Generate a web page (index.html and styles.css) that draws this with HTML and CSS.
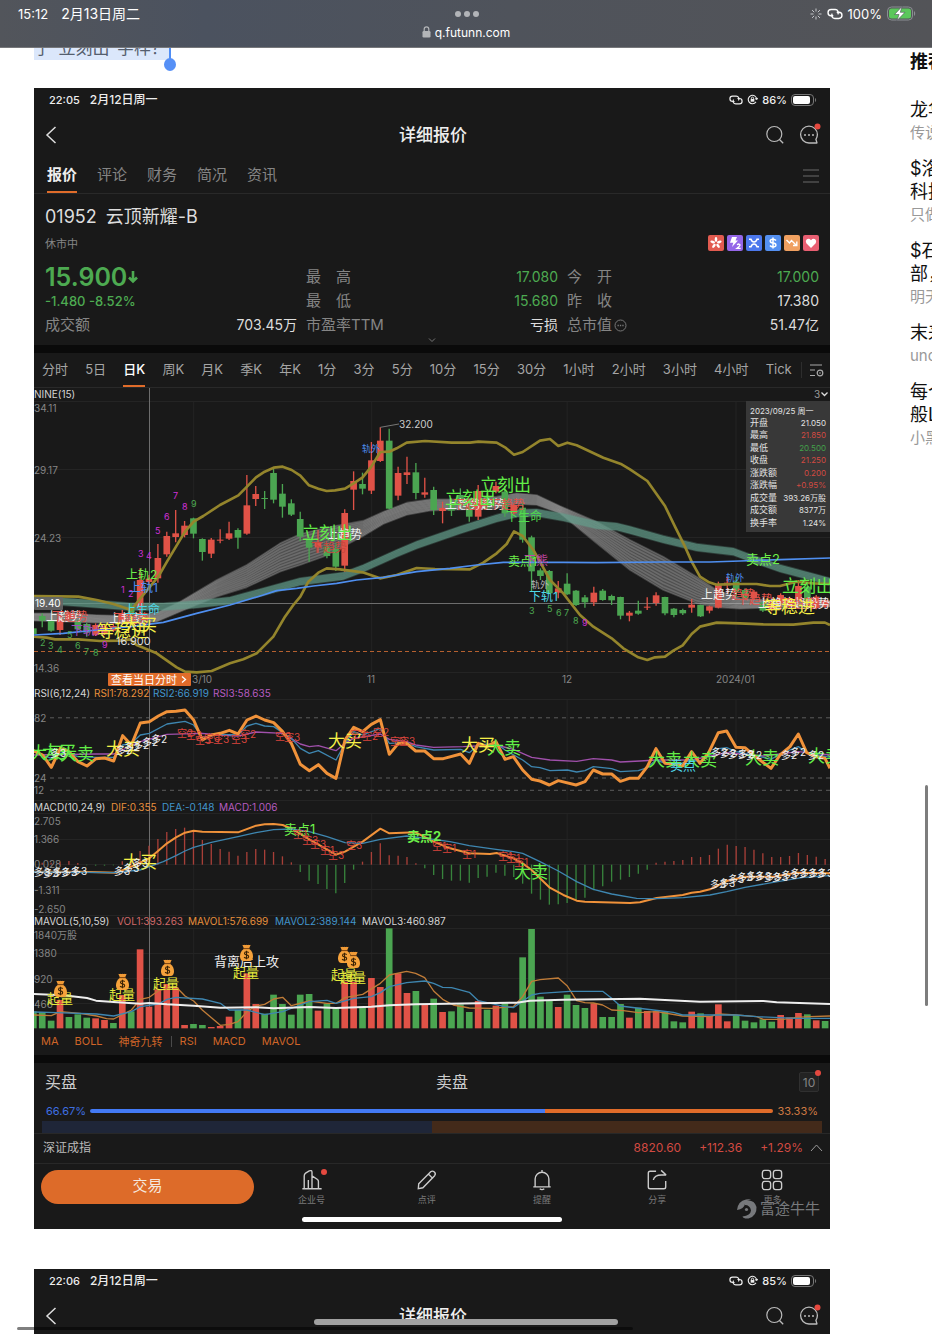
FILE: index.html
```html
<!DOCTYPE html>
<html lang="zh-CN">
<head>
<meta charset="utf-8">
<meta name="viewport" content="width=device-width, initial-scale=1">
<title>q.futunn.com</title>
<link rel="stylesheet" href="styles.css">
</head>
<body>
<svg class="defs" aria-hidden="true">
  <symbol id="i-link" viewBox="0 0 14 10"><path d="M5.500 6.500H3.600a2.700 2.700 0 0 1 0-5.400h3.600a2.700 2.700 0 0 1 2.200 4.300M8.500 3.500h1.900a2.700 2.700 0 0 1 0 5.400H6.800a2.700 2.700 0 0 1-2.200-4.300" fill="none" stroke="currentColor" stroke-width="1.200"/></symbol>
  <symbol id="i-lockrot" viewBox="0 0 12 12"><path d="M9.800 8.600A4.600 4.600 0 1 1 10.600 6M10.600 6l1-1.600M10.600 6L9 5" fill="none" stroke="currentColor" stroke-width="1.200"/><rect x="4" y="5.400" width="4" height="3" fill="currentColor"/><path d="M4.800 5.600V4.600a1.200 1.200 0 0 1 2.400 0v1" fill="none" stroke="currentColor"/></symbol>
  <symbol id="i-battery" viewBox="0 0 26 12"><rect x=".5" y=".5" width="22" height="11" rx="3.500" fill="none" stroke="#777"/><rect x="2" y="2" width="17" height="8" rx="2" fill="#fff"/><path d="M24 4v4c1.500-.6 1.500-3.400 0-4z" fill="#777"/></symbol>
  <symbol id="i-back" viewBox="0 0 12 18"><path d="M10.500 1L2 9l8.500 8" fill="none" stroke="currentColor" stroke-width="1.500"/></symbol>
  <symbol id="i-search" viewBox="0 0 20 20"><circle cx="9.300" cy="9" r="7.500" fill="none" stroke="currentColor" stroke-width="1.200"/><path d="M14.500 14.500l3.700 3.700" stroke="currentColor" stroke-width="1.300"/></symbol>
  <symbol id="i-chat" viewBox="0 0 24 24"><path d="M20 20H12a8.400 8.400 0 1 1 8.400-8.400c0 2-.6 3.300-1.500 4.700z" fill="none" stroke="currentColor" stroke-width="1.300" stroke-linejoin="round"/><g fill="currentColor"><circle cx="8" cy="12" r="1"/><circle cx="12" cy="12" r="1"/><circle cx="16" cy="12" r="1"/></g><circle cx="20.500" cy="3.500" r="3" fill="#e5493f"/></symbol>
  <symbol id="i-bag" viewBox="0 0 15 18"><path d="M3.300.800q1 .5 2 0 1 .6 2.200 0 1.200.6 2.200 0 1 .5 2 0L10.300 4H4.700z" fill="#f09a36"/><path d="M4.600 5h5.800Q14 8 14 12.300q0 4.700-3.500 4.700h-6Q1 17 1 12.300 1 8 4.600 5z" fill="#f6a23b"/><path d="M4.400 4.600h6.200" stroke="#8a4c12" stroke-width="1.100"/><path d="M9.700 8.700Q8.800 7.800 7.500 7.800q-2 0-2 1.600 0 1.200 2 1.500 2.200.4 2.200 1.800T7.500 14.200q-1.500 0-2.400-1M7.500 6.700v8.600" fill="none" stroke="#3a2205" stroke-width="1.100"/></symbol>
</svg>

<header class="browser">
  <div class="browser-status">
    <span class="clock">15:12<span>2月13日周二</span></span>
    <span class="dots"><i></i><i></i><i></i></span>
    <span class="signals">
      <svg width="12" height="12" viewBox="0 0 12 12"><path d="M6 .5v3M9.900 2.100L7.800 4.200M11.500 6h-3M9.900 9.900L7.800 7.800M6 11.500v-3M2.100 9.900l2.100-2.100M.5 6h3M2.100 2.100l2.100 2.100" stroke="#c6c8cc"/></svg>
      <svg width="16" height="12"><use href="#i-link"/></svg>
      <span>100%</span>
      <svg width="29" height="15" viewBox="0 0 29 15"><rect x=".5" y="1" width="25" height="13" rx="4" fill="none" stroke="#8b8e93"/><rect x="2" y="2.500" width="22" height="10" rx="2.500" fill="#5bc75b"/><path d="M15 .5L7.500 8.500h4.500L10 14.500l8-8.200h-4.700z" fill="#fff" stroke="#4c5058" stroke-width=".6"/><path d="M27 5v5c1.600-.8 1.600-4.200 0-5z" fill="#8b8e93"/></svg>
    </span>
  </div>
  <div class="address">
    <svg width="9" height="12" viewBox="0 0 9 12"><rect x=".5" y="5" width="8" height="6.500" rx="1.200" fill="#b3b5b8"/><path d="M2.200 5V3.200a2.300 2.300 0 0 1 4.600 0V5" fill="none" stroke="#b3b5b8" stroke-width="1.200"/></svg>
    q.futunn.com
  </div>
</header>

<div class="page">
  <main class="post">
    <p class="post-text"><span class="selected">了“立刻出”字样？</span></p>

    <article class="shot">
      <div class="status">
        <span class="clock">22:05<span>2月12日周一</span></span>
        <span class="signals"><svg width="14" height="10"><use href="#i-link"/></svg><svg width="11" height="11"><use href="#i-lockrot"/></svg><span>86%</span><svg width="26" height="12"><use href="#i-battery"/></svg></span>
      </div>
      <div class="titlebar">
        <button type="button" aria-label="返回"><svg width="12" height="18"><use href="#i-back"/></svg></button>
        <h2>详细报价</h2>
        <span class="actions"><button type="button" aria-label="搜索"><svg width="20" height="20"><use href="#i-search"/></svg></button><button type="button" aria-label="消息"><svg width="24" height="24"><use href="#i-chat"/></svg></button></span>
      </div>
      <nav class="tabs">
        <a href="#q" class="on">报价</a><a href="#c">评论</a><a href="#f">财务</a><a href="#g">简况</a><a href="#n">资讯</a>
        <button type="button" aria-label="菜单"><svg width="16" height="14" viewBox="0 0 16 14"><path d="M0 1h16M0 7h16M0 13h16" stroke="#6a6a6a"/></svg></button>
      </nav>

      <section class="quote" id="q">
        <h3>01952&ensp;云顶新耀-B</h3>
        <div class="state">
          <span>休市中</span>
          <span class="badges">
            <svg viewBox="0 0 16 16"><rect width="16" height="16" rx="2" fill="#e25b50"/><g fill="#fff"><ellipse cx="8" cy="4.500" rx="1.300" ry="2.400"/><ellipse cx="8" cy="4.500" rx="1.300" ry="2.400" transform="rotate(72 8 8)"/><ellipse cx="8" cy="4.500" rx="1.300" ry="2.400" transform="rotate(144 8 8)"/><ellipse cx="8" cy="4.500" rx="1.300" ry="2.400" transform="rotate(216 8 8)"/><ellipse cx="8" cy="4.500" rx="1.300" ry="2.400" transform="rotate(288 8 8)"/></g></svg>
            <svg viewBox="0 0 16 16"><rect width="16" height="16" rx="2" fill="#9566e8"/><path d="M5 2h5L8.500 5.500H11L5 12l1.300-4.300H3z" fill="#fff"/><path d="M10 9.700q2.600-1.500 3 .3 0 1-3 3.300h3.700" fill="none" stroke="#fff" stroke-width="1.300"/></svg>
            <svg viewBox="0 0 16 16"><rect width="16" height="16" rx="2" fill="#4c78ec"/><path d="M3 4.200h2Q6 7 8 7t3-2.800h2M3 11.800h2Q6 9 8 9t3 2.800h2" fill="none" stroke="#fff" stroke-width="1.500"/></svg>
            <svg viewBox="0 0 16 16"><rect width="16" height="16" rx="2" fill="#5490f1"/><path d="M11 5.500Q10 4.200 8 4.200 5.200 4.200 5.200 6T8 8t2.900 2-2.900 1.900q-2 0-3-1.400M8 2.500v11" fill="none" stroke="#fff" stroke-width="1.500"/></svg>
            <svg viewBox="0 0 16 16"><rect width="16" height="16" rx="2" fill="#f0a060"/><path d="M2.500 5l3 3 2-2.500 4.500 4.500M12.800 6.500V10.500H9" fill="none" stroke="#fff" stroke-width="1.400"/></svg>
            <svg viewBox="0 0 16 16"><rect width="16" height="16" rx="2" fill="#e85f72"/><path d="M8 13L3.300 8.300Q2 6 3.800 4.300 6 3 8 5.200q2-2.200 4.200-.9Q14 6 12.700 8.300z" fill="#fff"/></svg>
          </span>
        </div>
        <div class="figures">
          <dl>
            <div><dd class="price">15.900<svg width="10" height="13" viewBox="0 0 10 13"><path d="M5 0v10M1 6.500l4 4 4-4" fill="none" stroke="#4daa51" stroke-width="2.600"/></svg></dd></div>
            <div><dd class="change">-1.480 -8.52%</dd></div>
            <div><dt>成交额</dt><dd>703.45万</dd></div>
          </dl>
          <dl>
            <div><dt>最　高</dt><dd class="down">17.080</dd></div>
            <div><dt>最　低</dt><dd class="down">15.680</dd></div>
            <div><dt>市盈率TTM</dt><dd>亏损</dd></div>
          </dl>
          <dl>
            <div><dt>今　开</dt><dd class="down">17.000</dd></div>
            <div><dt>昨　收</dt><dd>17.380</dd></div>
            <div><dt>总市值<svg width="13" height="13" viewBox="0 0 13 13"><circle cx="6.500" cy="6.500" r="5.500" fill="none" stroke="#777"/><path d="M3.500 6.500h1.300M5.900 6.500h1.300M8.300 6.500h1.300" stroke="#777" stroke-width="1.300"/></svg></dt><dd>51.47亿</dd></div>
          </dl>
        </div>
        <svg class="expand" width="8" height="5" viewBox="0 0 8 5"><path d="M1 .5l3 3 3-3" fill="none" stroke="#777"/></svg>
      </section>

      <nav class="periods">
        <a href="#p">分时</a><a href="#p">5日</a><a href="#p" class="on">日K</a><a href="#p">周K</a><a href="#p">月K</a><a href="#p">季K</a><a href="#p">年K</a><a href="#p">1分</a><a href="#p">3分</a><a href="#p">5分</a><a href="#p">10分</a><a href="#p">15分</a><a href="#p">30分</a><a href="#p">1小时</a><a href="#p">2小时</a><a href="#p">3小时</a><a href="#p">4小时</a><a href="#p">Tick</a>
        <button type="button" aria-label="设置"><svg width="15" height="13" viewBox="0 0 15 13"><path d="M1 1h12M1 6h5M1 11.500h5" stroke="#aaa" stroke-width="1.200"/><circle cx="11" cy="9" r="2.800" fill="none" stroke="#aaa" stroke-width="1.200"/><circle cx="11" cy="9" r=".8" fill="#aaa"/></svg></button>
      </nav>

      <div class="chart" id="p">
        <svg class="plot" viewBox="34 388 796 642" role="img" aria-label="日K线图">
          <g class="grid">
            <path d="M193.700 401V672M371.700 401V672M567.200 401V672M736 401V672M193.700 700V800M371.700 700V800M567.200 700V800M736 700V800M193.700 814V915M371.700 814V915M567.200 814V915M736 814V915M193.700 928V1028M371.700 928V1028M567.200 928V1028M736 928V1028"/>
            <path d="M34 401.500H830M34 469.500H830M34 537.500H830M34 672.500H830M34 699.500H830M34 800.500H830M34 813.500H830M34 839.500H830M34 864.500H830M34 889.500H830M34 915.500H830M34 928.500H830M34 953.500H830M34 978.500H830M34 1003.500H830"/>
          </g>
          <g class="axis">
            <text x="34" y="412">34.11</text><text x="34" y="474">29.17</text><text x="34" y="542">24.23</text><text x="34" y="672">14.36</text>
            <text x="34" y="722">82</text><text x="34" y="782">24</text><text x="34" y="794">12</text>
            <text x="34" y="825">2.705</text><text x="34" y="843">1.366</text><text x="34" y="868">0.028</text><text x="34" y="894">-1.311</text><text x="34" y="913">-2.650</text>
            <text x="34" y="939">1840万股</text><text x="34" y="957">1380</text><text x="34" y="983">920</text><text x="34" y="1008">460</text>
            <text x="192" y="683">3/10</text><text x="367" y="683">11</text><text x="562" y="683">12</text><text x="716" y="683">2024/01</text>
          </g>
          <path d="M34 651.500H830" stroke="#b5602f" stroke-dasharray="4 3"/>
          <path d="M50 717.800H830M50 778H830M50 790.300H830" stroke="#5c5c5c" stroke-dasharray="4 4"/>
          <path d="M34 603.500H830M149.500 388V1028" stroke="#6d6d6d"/>

          <g transform="translate(30 380) scale(.33333)" fill="none" stroke-linejoin="round">
            <g id="ribbons"></g>
            <g id="candles"></g>
            <polyline class="band" points="10,648 145,650 200,660 250,672 304,690 331,655 360,620 385,590 411,545 438,500 465,455 491,425 520,408 570,375 625,346 651,320 678,292 704,275 731,263 758,260 785,270 811,287 837,316 865,326 890,333 915,331 945,326 971,310 998,292 1024,260 1051,216 1078,215 1100,205 1130,188 1185,183 1265,188 1320,188 1345,185 1400,188 1425,202 1452,224 1478,216 1530,182 1560,177 1585,198 1612,188 1640,196 1720,233 1775,253 1800,268 1852,303 1905,378 1935,440 1965,500 1985,545 2010,590 2035,606 2060,614 2120,612 2180,612 2220,618 2250,618 2300,605 2350,610 2400,612"/>
            <polyline class="band" points="10,770 50,773 75,778 145,778 210,783 270,782 300,778 320,795 380,820 440,862 465,875 500,877 545,873 600,850 640,838 680,820 730,770 765,710 790,675 811,650 835,605 865,578 890,565 930,568 998,577 1050,595 1100,585 1160,564 1215,567 1320,568 1360,548 1400,520 1430,492 1452,454 1478,468 1510,510 1530,545 1560,600 1600,640 1615,660 1650,705 1690,740 1745,775 1780,805 1825,832 1852,840 1875,832 1905,830 1930,812 1958,796 1985,762 2010,740 2060,728 2130,730 2200,733 2290,734 2350,728 2385,728 2400,735"/>
            <polyline stroke="#4f8ff0" stroke-width="5" points="10,765 100,760 200,750 300,740 400,727 500,700 600,675 700,645 740,632 800,625 850,618 920,610 980,600 1060,592 1160,575 1260,565 1340,555 1420,547 1600,547 1700,548 1900,546 2040,546 2130,543 2250,539 2400,534"/>
            <path d="M1051 142L1107 132" stroke="#777" stroke-width="3"/>
          </g>

          <g transform="translate(30 680) scale(.33333)" fill="none" stroke-linejoin="round">
            <g id="histogram"></g>
            <polyline class="purple" points="10,225 200,222 251,222 331,185 411,163 517,160 571,165 624,168 678,156 758,160 811,192 838,200 865,197 918,212 945,190 971,175 1051,162 1078,178 1130,185 1157,195 1211,202 1300,200 1398,195 1450,208 1505,232 1560,240 1640,244 1690,236 1745,240 1771,246 1830,243 1878,240 1985,240 2090,218 2200,228 2305,215 2400,225"/>
            <polyline class="blue" points="10,215 64,235 91,215 144,230 198,232 251,232 278,195 304,190 331,165 358,160 411,132 465,124 491,135 517,172 571,163 624,165 651,138 678,130 704,138 731,140 758,158 784,175 811,205 838,220 865,212 918,240 945,190 971,155 998,165 1051,145 1078,190 1130,188 1157,200 1211,210 1292,208 1318,218 1345,195 1398,190 1425,210 1478,240 1505,260 1530,263 1560,272 1612,270 1640,276 1665,272 1690,260 1745,266 1771,275 1825,272 1852,263 1878,240 1930,258 1985,240 2010,245 2065,206 2090,203 2118,215 2200,232 2223,238 2250,222 2305,200 2330,218 2400,232"/>
            <polyline class="orange thick" points="10,212 38,225 64,262 91,205 117,215 144,245 171,258 198,236 224,234 251,243 278,167 304,195 331,129 358,125 385,108 411,95 438,94 465,90 491,120 517,180 544,165 571,160 598,151 624,162 651,120 678,108 704,120 731,128 758,155 784,190 811,253 838,272 865,254 891,280 918,295 945,180 971,142 998,155 1024,133 1051,119 1078,223 1105,190 1130,190 1157,213 1184,213 1211,236 1240,236 1292,222 1318,250 1345,190 1370,200 1398,185 1425,238 1450,230 1478,270 1505,298 1530,303 1558,315 1585,302 1638,315 1665,305 1690,270 1718,282 1745,282 1771,304 1798,295 1825,295 1852,260 1878,206 1905,250 1930,252 1958,258 1985,215 2010,250 2035,220 2065,158 2090,153 2118,202 2145,203 2170,225 2200,248 2223,265 2250,225 2280,200 2305,162 2330,218 2358,230 2385,235 2400,265"/>
            <polyline class="orange" points="10,575 150,575 260,578 304,560 358,535 385,512 411,490 438,472 465,458 491,452 517,455 624,457 678,437 704,433 731,432 758,435 784,445 838,478 918,524 945,515 998,485 1051,446 1078,460 1157,457 1211,485 1260,505 1318,520 1380,522 1400,519 1450,535 1478,550 1505,570 1530,595 1558,622 1600,645 1640,662 1665,665 1800,669 1830,667 1880,654 1958,645 1985,638 2010,635 2040,628 2090,603 2145,590 2230,590 2300,578 2400,580"/>
            <polyline class="blue" points="10,576 250,578 330,570 400,545 438,527 465,513 491,502 544,487 624,470 678,458 731,449 784,447 838,455 891,470 945,488 998,490 1051,478 1130,468 1211,478 1260,485 1318,497 1398,508 1450,515 1478,520 1530,545 1585,573 1640,605 1690,628 1745,642 1820,655 1880,656 1960,653 2040,645 2090,635 2145,622 2230,607 2320,592 2400,587"/>
          </g>

          <g transform="translate(30 910) scale(.33333)" fill="none" stroke-linejoin="round">
            <g id="volume"></g>
            <polyline class="orange thin" points="10,315 64,317 91,305 150,310 200,318 230,326 251,327 304,300 331,268 358,262 385,242 438,230 465,258 491,273 517,300 571,346 598,343 624,335 651,305 678,288 704,283 731,267 758,262 784,287 838,273 891,280 918,280 945,263 998,253 1051,220 1078,195 1130,184 1157,190 1184,203 1211,243 1238,268 1270,285 1318,294 1385,295 1450,290 1478,260 1505,214 1530,209 1585,204 1612,228 1640,272 1665,278 1690,279 1718,285 1745,300 1780,302 1825,308 1880,305 1958,318 2040,320 2065,312 2118,315 2180,320 2200,328 2260,328 2300,322 2340,320 2400,318"/>
            <polyline class="blue" points="10,306 80,308 200,312 251,318 304,305 331,290 385,282 411,268 438,262 517,267 571,280 598,300 651,300 704,314 758,305 811,285 838,275 891,271 918,280 971,265 1024,260 1051,248 1078,230 1130,218 1184,213 1211,220 1238,232 1265,233 1318,247 1345,272 1425,290 1450,293 1505,255 1530,250 1620,244 1718,244 1745,265 1771,288 1870,300 1930,307 1958,315 2118,315 2180,320 2300,325 2400,325"/>
            <polyline stroke="#eee" stroke-width="6" points="10,252 100,256 171,264 198,272 251,276 331,281 358,279 411,283 491,287 571,293 678,292 731,295 838,291 918,294 1024,290 1078,286 1157,283 1460,278 1500,272 1600,269 1830,266 2010,275 2200,273 2240,277 2400,282"/>
          </g>

          <g class="legend">
            <text x="34" y="398">NINE(15)</text>
            <text x="34" y="697">RSI(6,12,24)</text><text x="94" y="697" class="t-orange">RSI1:78.292</text><text x="153" y="697" class="t-blue">RSI2:66.919</text><text x="213" y="697" class="t-purple">RSI3:58.635</text>
            <text x="34" y="811">MACD(10,24,9)</text><text x="111" y="811" class="t-orange">DIF:0.355</text><text x="162" y="811" class="t-blue">DEA:-0.148</text><text x="219" y="811" class="t-purple">MACD:1.006</text>
            <text x="34" y="925">MAVOL(5,10,59)</text><text x="117" y="925" class="t-pink">VOL1:393.263</text><text x="188" y="925" class="t-orange">MAVOL1:576.699</text><text x="275" y="925" class="t-blue">MAVOL2:389.144</text><text x="362" y="925">MAVOL3:460.987</text>
            <text x="814" y="398" class="t-grey">3</text><path d="M821.500 392.500l3 3 3-3" fill="none" stroke="#ddd" stroke-width="1.300"/>
            <text x="399" y="428" class="t-soft">32.200</text>
          </g>

          <g class="nine purple-n"><text x="121" y="593">1</text><text x="128" y="597">2</text><text x="138" y="557">3</text><text x="146" y="559">4</text><text x="155" y="534">5</text><text x="164" y="520">6</text><text x="173" y="499">7</text><text x="182" y="510">8</text><text x="102" y="648">9</text><text x="582" y="626">9</text></g>
          <g class="nine green-n"><text x="191" y="507">9</text><text x="40" y="646">2</text><text x="48" y="649">3</text><text x="57" y="653">4</text><text x="67" y="638">5</text><text x="75" y="649">6</text><text x="84" y="655">7</text><text x="93" y="656">8</text><text x="529" y="614">3</text><text x="547" y="612">5</text><text x="556" y="616">6</text><text x="564" y="616">7</text><text x="573" y="624">8</text></g>

          <g class="sig-s">
            <text x="46" y="621" fill="#eee">上趋势</text><text x="52" y="621" fill="#e0524a">下趋势</text><text x="71" y="635" fill="#a04ac0">下轨外</text>
            <text x="109" y="623" fill="#eee">上趋势</text><text x="113" y="623" fill="#e0524a">下趋势</text>
            <text x="126" y="579" fill="#6df04a">上轨2</text><text x="129" y="592" fill="#4f8ff0">上轨1</text><text x="124" y="614" fill="#4fd8e8">上生命</text>
            <text x="116" y="645" fill="#ddd" font-size="11">16.900</text>
            <text x="326" y="539" fill="#eee">上趋势</text><text x="311" y="552" fill="#c8483e">下趋势</text>
            <text x="445" y="509" fill="#eee">上趋势趋势</text><text x="453" y="509" fill="#e0524a">下趋势下趋势</text>
            <text x="506" y="521" fill="#52dc4e">下生命</text><text x="508" y="566" fill="#6df04a">卖点1</text><text x="524" y="565" fill="#c045a0">下熊</text>
            <text x="529" y="601" fill="#4fd8e8">下轨1</text>
            <text x="701" y="599" fill="#eee">上趋势</text><text x="731" y="599" fill="#e0524a">趋势</text><text x="737" y="604" fill="#e0524a">下趋势</text>
            <text x="758" y="608" fill="#eee">上趋势趋势势</text><text x="780" y="608" fill="#e0524a">下趋势</text>
            <text x="746" y="564" fill="#6df04a" font-size="13">卖点2</text>
            <text x="531" y="588" fill="#bbb" font-size="9">轨外</text><text x="362" y="452" fill="#4f8ff0" font-size="9">轨外</text><text x="726" y="581" fill="#4f8ff0" font-size="9">轨外</text>
          </g>
          <g class="sig-l">
            <text x="97" y="637" class="yellow">等稳进</text><text x="123" y="631" class="yellow">大买</text>
            <text x="302" y="539" class="lime">立刻出</text><text x="445" y="504" class="lime">立刻出</text><text x="480" y="491" class="lime">立刻出</text><text x="782" y="592" class="lime">立刻出</text>
            <text x="764" y="613" class="yellow">等稳进</text>
            <text x="30" y="759" class="lime">大买</text><text x="42" y="758" class="lime">大买</text><text x="60" y="760" class="lime">大卖</text><text x="106" y="755" class="yellow">大买</text><text x="328" y="747" class="yellow">大买</text><text x="461" y="751" class="yellow">大买</text><text x="487" y="754" class="lime">大卖</text><text x="648" y="766" class="lime">大卖</text><text x="683" y="766" class="lime">大卖</text><text x="745" y="764" class="lime">大卖</text><text x="808" y="762" class="lime">大卖</text>
            <text x="123" y="868" class="yellow">大买</text><text x="514" y="878" class="lime">大卖</text>
          </g>
          <g class="sig-s">
            <text x="670" y="770" fill="#4fd8e8" font-size="13">卖点</text>
            <text x="284" y="834" fill="#6df04a" font-size="13">卖点1</text><text x="407" y="841" fill="#6df04a" font-size="13" font-weight="700">卖点2</text>
            <text x="214" y="966" fill="#eee" font-size="13">背离后上攻</text>
          </g>
          <g id="notes" class="note"></g>
          <g class="qi"><text x="47" y="1003">起量</text><text x="109" y="999">起量</text><text x="153" y="988">起量</text><text x="233" y="977">起量</text><text x="331" y="979">起量</text><text x="340" y="982">起量</text></g>
          <use href="#i-bag" x="53" y="980" width="15" height="18"/><use href="#i-bag" x="115" y="973" width="15" height="18"/><use href="#i-bag" x="160" y="959" width="15" height="18"/><use href="#i-bag" x="239" y="944" width="15" height="18"/><use href="#i-bag" x="337" y="946" width="15" height="18"/><use href="#i-bag" x="346" y="951" width="15" height="18"/>

          <rect x="34" y="597" width="29" height="13" rx="1" fill="#666" fill-opacity=".9"/><text class="tag" x="35" y="607" font-size="10">19.40</text>
          <rect x="108" y="673" width="83" height="13" rx="1" fill="#e06c2a"/><text class="tag" x="111" y="684" font-size="11">查看当日分时</text><path d="M182 676.500l3.500 3-3.500 3" fill="none" stroke="#fff" stroke-width="1.300"/>
        </svg>
        <table class="tip">
          <caption>2023/09/25 周一</caption>
          <tbody>
          <tr><th>开盘</th><td>21.050</td></tr><tr><th>最高</th><td class="r">21.850</td></tr><tr><th>最低</th><td class="g">20.500</td></tr><tr><th>收盘</th><td class="r">21.250</td></tr><tr><th>涨跌额</th><td class="r">0.200</td></tr><tr><th>涨跌幅</th><td class="r">+0.95%</td></tr><tr><th>成交量</th><td>393.26万股</td></tr><tr><th>成交额</th><td>8377万</td></tr><tr><th>换手率</th><td>1.24%</td></tr>
          </tbody>
        </table>
      </div>

      <nav class="indicators"><a href="#p">MA</a><a href="#p">BOLL</a><a href="#p">神奇九转</a><i></i><a href="#p">RSI</a><a href="#p">MACD</a><a href="#p">MAVOL</a></nav>

      <section class="book">
        <div class="book-head"><h3>买盘</h3><h3>卖盘</h3><button type="button">10</button></div>
        <div class="ratio"><span>66.67%</span><b></b><span>33.33%</span></div>
        <div class="depth"><i></i><i></i></div>
      </section>
      <div class="index"><span>深证成指</span><b>8820.60</b><b>+112.36</b><b>+1.29%</b><svg width="13" height="8" viewBox="0 0 13 8"><path d="M1 7l5.500-6L12 7" fill="none" stroke="#999"/></svg></div>
      <footer class="dock">
        <div class="dock-row">
          <button type="button" class="trade">交易</button>
          <a href="#d"><svg viewBox="0 0 24 24"><path d="M1.500 21.500h21M3.500 21.500V7.500Q3.500 5.500 5 4.500l4-2.500q3-1 3 1.500v18M12 7.500l6 4q1 .6 1 2v8M8 21.500V12"/></svg>企业号<i class="dot"></i></a>
          <a href="#d"><svg viewBox="0 0 24 24"><path d="M3 16L16 3q2-1.500 4 .3t.3 4L7.500 20.500 2.500 21.500zM13.500 5.500l5 5"/></svg>点评</a>
          <a href="#d"><svg viewBox="0 0 24 24"><path d="M2.500 19.500h19M4.500 19.500V11a7.500 7.500 0 0 1 15 0v8.500M12 1v2.500M9.500 21.500q2.500 2 5 0"/></svg>提醒</a>
          <a href="#d"><svg viewBox="0 0 24 24"><path d="M11 2.500H4.500Q2.500 2.500 2.500 4.500v15q0 2 2 2h15q2 0 2-2V13M8 12q1-5.500 9-5.500h5M16.500 1.500l5.500 5"/></svg>分享</a>
          <a href="#d"><svg viewBox="0 0 24 24"><rect x="1.500" y="1.500" width="9" height="9" rx="2.500"/><rect x="13.500" y="1.500" width="9" height="9" rx="2.500"/><rect x="1.500" y="13.500" width="9" height="9" rx="2.500"/><rect x="13.500" y="13.500" width="9" height="9" rx="2.500"/></svg>更多</a>
        </div>
        <div class="home"></div>
        <div class="mark"><svg width="20" height="20" viewBox="0 0 20 20"><path d="M0 11Q1 2 9 .5q4-.5 5 .5-5 0-6 4-1 5-8 6z" fill="#77797c"/><path d="M8 2q9-2 11.500 6 .5 9-8 11.500-5 .5-6-2 8-1 8.500-6Q13 6 8 6z" fill="#77797c"/><circle cx="9.500" cy="10.500" r="1.600" fill="#77797c"/></svg>富途牛牛</div>
      </footer>
    </article>

    <article class="shot">
      <div class="status">
        <span class="clock">22:06<span>2月12日周一</span></span>
        <span class="signals"><svg width="14" height="10"><use href="#i-link"/></svg><svg width="11" height="11"><use href="#i-lockrot"/></svg><span>85%</span><svg width="26" height="12"><use href="#i-battery"/></svg></span>
      </div>
      <div class="titlebar">
        <button type="button" aria-label="返回"><svg width="12" height="18"><use href="#i-back"/></svg></button>
        <h2>详细报价</h2>
        <span class="actions"><button type="button" aria-label="搜索"><svg width="20" height="20"><use href="#i-search"/></svg></button><button type="button" aria-label="消息"><svg width="24" height="24"><use href="#i-chat"/></svg></button></span>
      </div>
    </article>
  </main>

  <aside class="side">
    <h2>推荐</h2>
    <a href="#s">龙华<small>传说</small></a>
    <a href="#s">$洛<br>科技<small>只做</small></a>
    <a href="#s">$石<br>部，<small>明天</small></a>
    <a href="#s">末来<small>unc</small></a>
    <a href="#s">每个<br>般L<small>小黑</small></a>
  </aside>
</div>
<div class="bar-v"></div><div class="bar-h"></div><div class="bar-home"></div>
<script src="chart.js"></script>
</body>
</html>
```
FILE: styles.css
```css
* { box-sizing: border-box; }
body { margin: 0; height: 100vh; overflow: hidden; background: #fff; font-family: Inter, "Noto Sans CJK SC", sans-serif; color: #111; }
h2, h3, p, dl, dd { margin: 0; font-weight: 400; }
a { color: inherit; text-decoration: none; }
button { padding: 0; border: 0; background: none; color: inherit; font: inherit; display: flex; align-items: center; justify-content: center; }
svg { display: block; }
.defs { position: absolute; width: 0; height: 0; }

.browser { position: fixed; inset: 0 0 auto; z-index: 5; height: 48px; color: #fff; background: linear-gradient(90deg, #52555b, #4b525f 22%, #4f535b 55%, #535458); border-bottom: 1px solid #77787b; }
.browser-status { display: grid; grid-template-columns: 1fr auto 1fr; align-items: center; height: 27px; padding: 0 16px 0 18px; font-size: 13px; }
.clock { display: flex; align-items: center; line-height: 18px; }
.browser .clock span { margin-left: 13px; font-size: 14px; }
.dots { display: flex; gap: 3px; }
.dots i { width: 6px; height: 6px; border-radius: 50%; background: #b2b4b8; }
.signals { display: flex; align-items: center; justify-content: flex-end; gap: 5px; }
.address { display: flex; justify-content: center; align-items: center; gap: 4px; height: 10px; font-size: 12px; }

.page { display: grid; grid-template-columns: minmax(0, 1fr) 22px; gap: 80px; padding: 36px 0 0 34px; }
.post-text { height: 24px; margin-bottom: 28px; font-size: 17px; line-height: 24px; color: #555e6e; }
.selected { position: relative; display: inline-block; height: 24px; width: 137px; white-space: nowrap; background: #dbe7fb; border-right: 2px solid #4f8df5; }
.selected::after { content: ""; position: absolute; right: -7px; top: 22px; width: 12px; height: 13px; border-radius: 50%; background: #5690f6; }

.shot { background: #191919; color: #ddd; margin-bottom: 40px; }
.status { display: flex; justify-content: space-between; align-items: center; height: 24px; padding: 0 13px 1px 15px; font-size: 11px; font-weight: 500; color: #eee; }
.status .signals { gap: 4px; }
.status .clock span { margin-left: 10px; font-size: 12px; }
.titlebar { display: grid; grid-template-columns: 1fr auto 1fr; align-items: center; height: 46px; padding: 0 9px 0 11px; }
.titlebar > button { justify-self: start; }
.titlebar h2 { font-size: 17px; font-weight: 500; line-height: 24px; color: #eee; }
.actions { display: flex; justify-content: flex-end; align-items: center; gap: 12px; color: #bbb; }
.tabs { display: flex; align-items: flex-end; gap: 20px; height: 36px; padding: 0 11px 0 13px; border-bottom: 1px solid #292929; font-size: 15px; color: #858585; }
.tabs a { line-height: 32px; border-bottom: 2px solid transparent; }
.tabs .on { font-weight: 700; color: #eee; border-color: #e06c2a; }
.tabs button { margin-left: auto; align-self: center; }

.quote { position: relative; height: 151px; padding: 9px 11px 0 11px; }
.quote h3 { font-size: 18px; line-height: 28px; color: #ddd; }
.state { display: flex; justify-content: space-between; align-items: center; height: 24px; font-size: 11px; color: #858585; }
.badges { display: flex; gap: 3px; }
.badges svg { width: 16px; height: 16px; }
.figures { display: grid; grid-template-columns: repeat(3, 1fr); gap: 9px; margin-top: 10px; }
.figures dl > div { display: flex; justify-content: space-between; align-items: center; height: 24px; font-size: 14px; }
.figures dt { display: flex; align-items: center; gap: 2px; font-size: 15px; line-height: 20px; color: #858585; }
.figures dd { line-height: 20px; }
.figures .price { display: flex; align-items: center; gap: 1px; font-size: 25px; font-weight: 600; color: #4daa51; }
.figures .change { font-size: 13px; font-weight: 500; color: #4daa51; }
.figures .down { color: #4daa51; }
.expand { position: absolute; left: 50%; bottom: 2px; margin-left: -4px; }

.periods { display: flex; justify-content: space-between; height: 43px; padding: 0 6px 0 8px; border-top: 8px solid #0a0a0a; border-bottom: 1px solid #292929; font-size: 13px; line-height: 32px; color: #a5a5a5; }
.periods .on { font-weight: 500; color: #fff; border-bottom: 2px solid #e06c2a; }
.periods button { padding-left: 7px; border-left: 1px solid #2d2d2d; height: 16px; margin: 9px 0 0 -8px; }

.chart { position: relative; }
.plot { width: 100%; height: auto; }
.grid { stroke: #242424; fill: none; }
.axis { font-size: 10px; fill: #858585; }
.legend { font-size: 10px; fill: #d5d5d5; }
.legend .t-orange { fill: #e8903c; }
.legend .t-blue { fill: #4295cc; }
.legend .t-purple { fill: #b65cc0; }
.legend .t-pink { fill: #d06868; }
.legend .t-grey { fill: #999; }
.legend .t-soft { fill: #ccc; font-size: 10px; }
.band { stroke: #94852c; stroke-width: 8; }
.orange { stroke: #f0923a; stroke-width: 6; }
.orange.thick { stroke-width: 9; }
.orange.thin { stroke: #c07c38; stroke-width: 4; }
.blue { stroke: #3e86b0; stroke-width: 4; }
.purple { stroke: #a050ab; stroke-width: 4; }
.nine { font-size: 9px; }
.purple-n { fill: #d030d8; }
.green-n { fill: #4daa51; }
.sig-s { font-size: 12px; }
.sig-l { font-size: 17px; }
.lime { fill: #62ee48; }
.yellow { fill: #f6f048; }
.note { font-size: 10px; }
.qi { font-size: 13px; fill: #e5ea3c; }
.tag { fill: #fff; }
.plot .up { fill: #e05247; stroke: #e05247; }
.plot .dn { fill: #4ba551; stroke: #4ba551; }

.tip { position: absolute; right: 0; top: 13px; display: block; width: 84px; height: 131px; background: #383838; border-spacing: 0; color: #e2e2e2; }
.tip caption { display: block; padding: 5px 0 0 4px; height: 15px; text-align: left; font-size: 8px; line-height: 10px; }
.tip tbody { display: block; padding: 1px 4px; }
.tip tr { display: flex; justify-content: space-between; height: 12px; line-height: 12px; }
.tip tr:nth-child(even) { height: 13px; }
.tip th { padding: 0; font-weight: 400; font-size: 9px; }
.tip td { padding: 0; font-size: 8px; white-space: nowrap; }
.tip .r { color: #d24a42; }
.tip .g { color: #43a04a; }

.indicators { display: flex; align-items: center; gap: 16px; height: 25px; padding: 0 7px 3px; font-size: 11px; color: #cf6528; }
.indicators i { width: 1px; height: 11px; margin: 0 -8px; background: #4a4a4a; }

.book { border-top: 8px solid #0a0a0a; }
.book-head { position: relative; display: grid; grid-template-columns: 391px 1fr auto; align-items: center; height: 38px; padding: 0 11px; }
.book-head h3 { font-size: 16px; line-height: 20px; color: #ccc; }
.book-head button { width: 20px; height: 20px; border: 1px solid #303030; background: #232323; border-radius: 2px; font-size: 12px; color: #858585; }
.book-head::after { content: ""; position: absolute; right: 9px; top: 7px; width: 6px; height: 6px; border-radius: 50%; background: #e5493f; }
.ratio { display: flex; align-items: center; gap: 4px; height: 20px; padding: 0 12px; font-size: 11px; color: #3e6fe0; }
.ratio b { flex: 1; height: 4px; border-radius: 2px; background: linear-gradient(90deg, #437af5 66.67%, #e06c2a 66.67%); }
.ratio span:last-child { color: #cf7a44; }
.depth { display: flex; height: 12px; padding: 0 8px; }
.depth i { flex: 1; background: #1f2638; }
.depth i:last-child { background: #432a1a; }
.index { display: flex; align-items: center; height: 31px; padding: 0 7px 1px 9px; border: solid #282828; border-width: 1px 0; font-size: 12px; line-height: 18px; color: #bbb; }
.index span { margin-right: auto; }
.index b { margin-left: 18px; font-weight: 400; color: #d24a42; }
.index svg { margin-left: 7px; }
.dock { position: relative; height: 65px; padding: 5px 0 0 7px; }
.dock-row { display: flex; align-items: start; }
.trade { width: 213px; height: 34px; margin-top: 1px; padding-bottom: 3px; border-radius: 17px; background: #dd6b29; color: #f5e8df; font-size: 15px; line-height: 20px; }
.dock-row a { position: relative; flex: 1; display: flex; flex-direction: column; align-items: center; gap: 2px; font-size: 9px; line-height: 14px; color: #7a7a7a; }
.dock-row a svg { width: 22px; height: 22px; fill: none; stroke: #ccc; stroke-width: 1.5; }
.dot { position: absolute; top: 0; left: 50%; margin-left: 9px; width: 6px; height: 6px; border-radius: 50%; background: #e5493f; }
.home { position: absolute; bottom: 7px; left: 50%; width: 260px; height: 5px; margin-left: -130px; border-radius: 3px; background: #fff; }
.mark { position: absolute; right: 10px; bottom: 9px; display: flex; align-items: center; gap: 3px; height: 22px; font-size: 15px; line-height: 20px; color: #77797c; }

.side { padding-top: 14px; overflow: hidden; white-space: nowrap; font-size: 18px; line-height: 23px; }
.side h2 { height: 24px; margin-bottom: 24px; font-size: 18px; font-weight: 700; line-height: 24px; }
.side a { display: block; margin-bottom: 13px; }
.side small { display: block; font-size: 15px; color: #999; }

.bar-v, .bar-h, .bar-home { position: fixed; z-index: 6; border-radius: 3px; }
.bar-v { right: 4px; top: 785px; width: 3px; height: 221px; background: #7d7d7d; }
.bar-h { left: 17px; bottom: 4px; width: 616px; height: 3px; background: rgba(0, 0, 0, .5); }
.bar-home { left: 314px; bottom: 9px; width: 304px; height: 6px; background: #a0a0a0; }
```
FILE: chart.js
```js
const NS = 'http://www.w3.org/2000/svg';
const add = (id, tag, attrs, text) => {
  const el = document.createElementNS(NS, tag);
  for (const k in attrs) el.setAttribute(k, attrs[k]);
  if (text) el.textContent = text;
  document.getElementById(id).appendChild(el);
};
const STEP = 26.69;
const xAt = i => 10 + STEP * i;

// Daily candles: direction, high, body top, body bottom, low (thirds of a pixel).
const candles = `g740,745,762,765 g700,708,722,742 g718,720,752,755 r705,718,750,765 r695,700,715,720 g720,725,748,752 g728,732,758,770 r730,735,765,768 r735,740,760,765 r730,738,752,756 r690,700,720,735 g670,680,705,712 r565,600,680,700 r585,596,606,612 r492,534,595,608 r455,468,523,530 r390,460,471,487 r423,437,465,472 g413,415,461,475 g475,477,516,542 r474,479,521,534 r448,479,482,490 r425,460,476,480 g445,450,473,506 r285,376,461,464 r318,342,357,378 g333,354,357,387 g265,279,359,370 g312,341,380,413 g358,370,404,408 g395,417,470,484 g470,478,503,545 r450,487,502,518 g490,500,528,535 g490,506,560,573 r388,399,557,575 r274,303,329,390 g278,312,326,343 r186,241,332,342 r142,182,243,246 g146,182,386,388 r260,279,347,361 r230,277,285,312 g249,277,339,358 r293,337,344,353 g320,330,390,405 r365,384,393,430 g360,372,392,408 g325,345,365,370 g375,380,410,425 r315,333,410,420 g340,350,385,390 r305,318,335,340 g318,335,400,410 r370,375,400,405 g365,383,479,488 g467,472,574,635 g565,571,588,600 g570,573,640,642 r603,625,638,655 g580,611,643,645 g630,632,675,678 g645,652,667,683 r620,638,667,678 g627,632,660,662 g644,648,661,675 g650,651,707,718 r693,698,707,724 g662,692,701,704 r652,680,683,690 r637,646,669,677 g650,651,700,706 g684,686,705,712 g686,690,700,705 r657,674,683,698 g674,675,709,711 r677,679,692,700 r605,615,683,685 r590,608,616,640 g590,605,635,650 g625,630,655,660 r630,635,655,660 g664,668,692,696 r665,670,690,694 r640,645,670,690 r650,655,680,685 r600,618,660,668 g610,620,665,670 r645,650,685,688 r655,660,680,684`.split(' ');
candles.forEach((c, i) => {
  const [h, t, b, l] = c.slice(1).split(',').map(Number);
  const cls = c[0] === 'r' ? 'up' : 'dn';
  add('candles', 'path', { class: cls, d: `M${xAt(i)} ${h}V${l}`, 'stroke-width': 4 });
  add('candles', 'rect', { class: cls, 'stroke-width': 0, x: xAt(i) - 10, y: t, width: 20, height: b - t });
});

// Ribbon envelopes: x, upper edge, lower edge.
const trend = [[10,700,722],[100,700,725],[200,705,728],[300,708,732],[380,698,725],[450,665,695],[560,600,650],[650,555,622],[750,490,575],[811,462,555],[880,445,530],[930,435,505],[1000,422,468],[1060,395,432],[1130,368,405],[1200,358,392],[1300,358,388],[1400,350,385],[1460,340,372],[1520,345,375],[1590,378,400],[1700,425,490],[1800,480,570],[1900,530,630],[2000,590,670],[2060,630,682],[2130,655,686],[2250,662,682],[2400,662,680]];
const life = [[10,662],[100,665],[200,672],[300,680],[400,680],[500,673],[600,662],[700,635],[810,605],[940,588],[1000,565],[1100,520],[1160,495],[1290,450],[1400,415],[1460,400],[1520,398],[1600,412],[1700,435],[1760,440],[1800,450],[1900,478],[2000,502],[2110,515],[2150,530],[2250,565],[2400,605]].map(([x, y]) => [x, y - 11, y + 11]);
const ribbon = (rows, color, n, base) => {
  const top = rows.map(([x, a]) => `${x},${a}`);
  const bottom = rows.map(([x, , b]) => `${x},${b}`).reverse();
  add('ribbons', 'polygon', { points: top.concat(bottom).join(' '), fill: color, 'fill-opacity': base });
  for (let k = 0; k <= n; k++) {
    const points = rows.map(([x, a, b]) => `${x},${(a + (b - a) * k / n).toFixed(1)}`).join(' ');
    add('ribbons', 'polyline', { points, stroke: color, 'stroke-width': 5, 'stroke-opacity': .28 });
  }
};
ribbon(trend, '#b4b4b4', 10, .35);
ribbon(life, '#649e8c', 5, .6);

const hist = [548,548,548,547,543,549,556,557,557,556,544,540,513,497,477,456,447,443,453,480,492,507,515,527,516,507,509,516,529,547,576,602,612,627,640,609,569,545,516,490,526,527,531,550,565,585,597,602,602,608,594,590,578,587,591,611,641,659,674,673,669,663,653,631,619,605,599,591,581,569,548,545,543,540,531,531,525,506,494,498,501,509,520,531,531,528,519,525,530,537];
hist.forEach((y, i) => add('histogram', 'path', { stroke: y < 554 ? '#a83f38' : '#37833c', 'stroke-width': 4, d: `M${xAt(i)} 554V${y}` }));

const volume = 'g304 g306 g332 r270 g321 g313 g323 r325 r330 g339 r255 g304 r118 r290 r238 r222 r233 r345 g342 g345 r351 r348 r320 g300 r190 r282 g311 g254 g282 g314 g254 g252 r302 g280 g292 r215 r215 g290 r204 r231 g55 r190 r249 g243 r284 g266 r306 g304 g283 g306 r273 g299 r287 g280 r308 g142 g57 g260 g272 r291 g254 g285 g294 r280 g321 g321 g282 r323 g293 r303 r303 g304 g334 g337 r305 g310 r318 r283 r334 g315 g332 g337 g328 g335 r315 r322 r309 g313 r331 g333'.split(' ');
volume.forEach((v, i) => {
  const y = +v.slice(1);
  add('volume', 'rect', { class: v[0] === 'r' ? 'up' : 'dn', 'stroke-width': 0, x: xAt(i) - 10, y, width: 20, height: 355 - y });
});

// Long and short marks along the RSI and MACD curves.
const notes = (color, word, list) => list.forEach(([x, y]) => add('notes', 'text', { x, y, fill: color }, word));
notes('#d8453c', '空2', [[177,737],[186,739],[240,738],[350,738],[362,740],[373,736]]);
notes('#d8453c', '空3', [[195,744],[204,742],[213,743],[231,743],[275,740],[284,741],[390,745],[399,745]]);
notes('#eee', '多2', [[116,754],[124,751],[133,749],[142,746],[151,743],[711,756],[720,757],[738,758],[746,759],[781,759],[790,756],[808,759]]);
notes('#eee', '多3', [[50,757],[728,758],[34,876],[43,877],[52,876],[61,876],[71,875],[114,875],[123,872],[132,867]]);
notes('#d8453c', '空1', [[293,838],[432,850],[442,852],[462,858],[498,860],[506,862],[514,866],[320,854]]);
notes('#d8453c', '空3', [[302,844],[310,848],[328,859],[346,849]]);
notes('#eee', '多3', [[710,888],[719,887],[728,883],[737,881],[746,880],[755,880],[764,881],[772,881],[781,879],[790,877],[799,877],[808,877],[817,877]]);
```
